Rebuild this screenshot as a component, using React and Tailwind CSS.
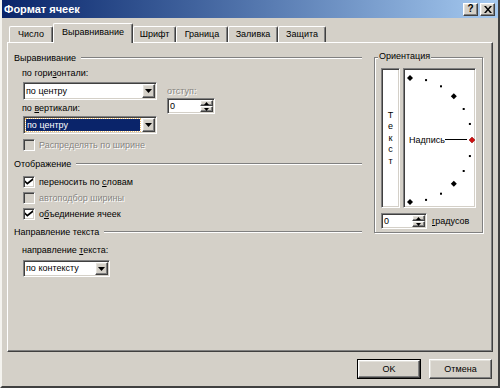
import React from 'react';

const sunken =
  'border border-t-[#808080] border-l-[#808080] border-r-white border-b-white shadow-[inset_1px_1px_0_#404040,inset_-1px_-1px_0_#d4d0c8]';
const raised =
  'border border-t-white border-l-white border-r-[#404040] border-b-[#404040] shadow-[inset_-1px_-1px_0_#808080,inset_1px_1px_0_#e4e2dc]';
const disabledText = 'text-[#868480] [text-shadow:1px_1px_0_#fff]';

function Arrow() {
  return (
    <svg width="7" height="4" viewBox="0 0 7 4">
      <path d="M0 0h7L3.5 4z" fill="#000" />
    </svg>
  );
}

function DropBtn() {
  return (
    <div className={`w-[13px] h-full flex items-center justify-center bg-[#d4d0c8] ${raised}`}>
      <Arrow />
    </div>
  );
}

function Combo({ width, text, selected, h = 'h-[18px]' }) {
  return (
    <div className={`flex items-stretch p-[1px] bg-white ${h} ${width} ${sunken}`}>
      <div className="flex-1 flex items-center pl-[1px] pr-[2px]">
        {selected ? (
          <span className="flex-1 h-[12px] flex items-center bg-[#0a246a] text-white pl-[1px] outline-1 outline-dotted outline-[#f0c070]">
            {text}
          </span>
        ) : (
          <span>{text}</span>
        )}
      </div>
      <DropBtn />
    </div>
  );
}

function Spin({ width }) {
  return (
    <div className={`flex items-stretch p-[1px] bg-white h-[16px] ${width} ${sunken}`}>
      <div className="flex-1 flex items-center pl-[1px]">0</div>
      <div className="w-[13px] flex flex-col">
        <div className={`flex-1 flex items-center justify-center bg-[#d4d0c8] ${raised}`}>
          <svg width="5" height="3" viewBox="0 0 5 3">
            <path d="M2.5 0L5 3H0z" fill="#000" />
          </svg>
        </div>
        <div className={`flex-1 flex items-center justify-center bg-[#d4d0c8] ${raised}`}>
          <svg width="5" height="3" viewBox="0 0 5 3">
            <path d="M0 0h5L2.5 3z" fill="#000" />
          </svg>
        </div>
      </div>
    </div>
  );
}

function GroupLabel({ children, className = '' }) {
  return (
    <div className={`flex items-center h-[14px] gap-[5px] ${className}`}>
      <span>{children}</span>
      <div className="flex-1 h-[2px] border-t border-t-[#808080] border-b border-b-white" />
    </div>
  );
}

function Check({ checked, disabled, children, className = '' }) {
  return (
    <div className={`flex items-center h-[14px] gap-[4px] ml-[9px] ${className}`}>
      <div
        className={`w-[12px] h-[12px] flex items-center justify-center ${sunken} ${
          disabled ? 'bg-[#d4d0c8]' : 'bg-white'
        }`}
      >
        {checked && (
          <svg width="8" height="8" viewBox="0 0 7 7">
            <path d="M0 2l2 2 5-4v2L2 6 0 4z" fill="#000" />
          </svg>
        )}
      </div>
      <span className={disabled ? disabledText : ''}>{children}</span>
    </div>
  );
}

function Dial() {
  const cx = 6;
  const cy = 71;
  const r = 62;
  const pts = [];
  for (let i = -6; i <= 6; i++) {
    const a = (i * 15 * Math.PI) / 180;
    pts.push({ i, x: cx + r * Math.cos(a), y: cy + r * Math.sin(a) });
  }
  return (
    <svg width="71" height="138" viewBox="0 0 71 138">
      {pts.map(p => {
        if (p.i === 0) {
          return (
            <path
              key={p.i}
              d={`M${p.x} ${p.y - 3}l3 3-3 3-3-3z`}
              fill="#d01010"
              stroke="#800000"
              strokeWidth="0.5"
            />
          );
        }
        if (Math.abs(p.i) === 6 || Math.abs(p.i) === 3) {
          return <path key={p.i} d={`M${p.x} ${p.y - 3}l3 3-3 3-3-3z`} fill="#000" />;
        }
        return <rect key={p.i} x={p.x - 1} y={p.y - 1} width="2" height="2" fill="#000" />;
      })}
      <text
        x="5"
        y="74"
        fontSize="9"
        fontFamily="'Liberation Sans', Arial, sans-serif"
        fill="#000"
      >
        Надпись
      </text>
      <line x1="41" y1="70.5" x2="63" y2="70.5" stroke="#000" strokeWidth="1" />
    </svg>
  );
}

export default function App() {
  const tabs = [
    { name: 'Число', w: 'w-[44px]' },
    { name: 'Выравнивание', w: 'w-[80px]', active: true },
    { name: 'Шрифт', w: 'w-[43px]' },
    { name: 'Граница', w: 'w-[52px]' },
    { name: 'Заливка', w: 'w-[50px]' },
    { name: 'Защита', w: 'w-[48px]' },
  ];

  return (
    <div className="w-[500px] h-[388px] overflow-hidden bg-[#d4d0c8] border-l-2 border-l-[#f4f3ef] border-r-2 border-r-[#404040] border-b-2 border-b-[#404040] text-[9px] leading-none text-black font-['Liberation_Sans',Arial,sans-serif]">
      {/* заголовок */}
      <div className="h-[18px] flex items-center justify-between bg-gradient-to-r from-[#0a246a] to-[#a6caf0] pl-[2px] pr-[3px]">
        <span className="text-white font-bold text-[11px]">Формат ячеек</span>
        <div className="flex gap-[2px]">
          <div className={`w-[15px] h-[13px] flex items-center justify-center bg-[#d4d0c8] font-bold text-[10px] ${raised}`}>
            ?
          </div>
          <div className={`w-[15px] h-[13px] flex items-center justify-center bg-[#d4d0c8] ${raised}`}>
            <svg width="8" height="7" viewBox="0 0 8 7">
              <path d="M0 0h2l2 2.5L6 0h2L5 3.5 8 7H6L4 4.5 2 7H0l3-3.5z" fill="#000" />
            </svg>
          </div>
        </div>
      </div>

      {/* вкладки */}
      <div className="relative z-10 flex items-end h-[20px] mt-[5px] ml-[7px]">
        {tabs.map(t => (
          <div
            key={t.name}
            className={`${t.w} flex items-center justify-center bg-[#d4d0c8] border-t border-l border-t-white border-l-white border-r border-r-[#404040] rounded-t-[2px] shadow-[inset_-1px_0_0_#808080] ${
              t.active ? 'h-[20px] pb-[2px]' : 'h-[16px] mb-px'
            }`}
          >
            {t.name}
          </div>
        ))}
      </div>

      {/* панель */}
      <div className="-mt-px ml-[5px] w-[486px] h-[310px] flex border-t border-l border-t-white border-l-white border-r border-b border-r-[#404040] border-b-[#404040] shadow-[inset_-1px_-1px_0_#808080]">
        <div className="w-[354px] pl-[6px] flex flex-col">
          <GroupLabel className="mt-[8px]">Выравнивание</GroupLabel>
          <div className="flex ml-[8px]">
            <div className="flex flex-col">
              <div className="h-[14px] mt-[1px] flex items-center">
                <span>
                  по гори<u>з</u>онтали:
                </span>
              </div>
              <div className="ml-px mt-[2px]">
                <Combo width="w-[134px]" text="по центру" />
              </div>
              <div className="h-[14px] mt-[1px] flex items-center">
                <span>
                  по <u>в</u>ертикали:
                </span>
              </div>
              <div className="ml-px mt-[1px]">
                <Combo width="w-[134px]" text="по центру" selected />
              </div>
            </div>
            <div className="flex flex-col ml-[10px] mt-[19px]">
              <div className={`h-[14px] flex items-center ${disabledText}`}>отступ:</div>
              <Spin width="w-[48px]" />
            </div>
          </div>
          <Check disabled className="mt-[4px]">
            Распределять по ширине
          </Check>
          <GroupLabel className="mt-[5px]">Отображение</GroupLabel>
          <Check checked className="mt-[4px]">
            переносить по <u>с</u>ловам
          </Check>
          <Check disabled className="mt-[2px]">
            автоподбор ширины
          </Check>
          <Check checked className="mt-[2px]">
            о<u>б</u>ъединение ячеек
          </Check>
          <GroupLabel className="mt-[4px]">Направление текста</GroupLabel>
          <div className="h-[14px] mt-[4px] ml-[8px] flex items-center">
            <span>
              направление <u>т</u>екста:
            </span>
          </div>
          <div className="ml-[9px] mt-[3px]">
            <Combo width="w-[87px]" text="по контексту" h="h-[17px]" />
          </div>
        </div>

        {/* ориентация */}
        <div className="relative ml-[12px] mt-[14px] w-[109px] h-[176px] border border-[#808080] shadow-[inset_1px_1px_0_#fff,1px_1px_0_#fff] pl-[6px] pt-[10px]">
          <span className="absolute -top-[6px] left-[3px] px-[1px] bg-[#d4d0c8]">Ориентация</span>
          <div className="flex gap-[3px]">
            <div className={`w-[19px] h-[140px] bg-white flex flex-col items-center justify-center ${sunken}`}>
              {['Т', 'е', 'к', 'с', 'т'].map((c, i) => (
                <span key={i} className="h-[11.5px] flex items-center">
                  {c}
                </span>
              ))}
            </div>
            <div className={`w-[73px] h-[140px] bg-white ${sunken}`}>
              <Dial />
            </div>
          </div>
          <div className="flex items-center gap-[5px] mt-[5px]">
            <Spin width="w-[46px]" />
            <span>
              <u>г</u>радусов
            </span>
          </div>
        </div>
      </div>

      {/* кнопки */}
      <div className="flex justify-end gap-[8px] mt-[7px] pr-[6px]">
        <div className="w-[64px] h-[20px] border border-black">
          <div className={`w-full h-full flex items-center justify-center bg-[#d4d0c8] ${raised}`}>OK</div>
        </div>
        <div className={`w-[63px] h-[20px] flex items-center justify-center bg-[#d4d0c8] ${raised}`}>
          Отмена
        </div>
      </div>
    </div>
  );
}
